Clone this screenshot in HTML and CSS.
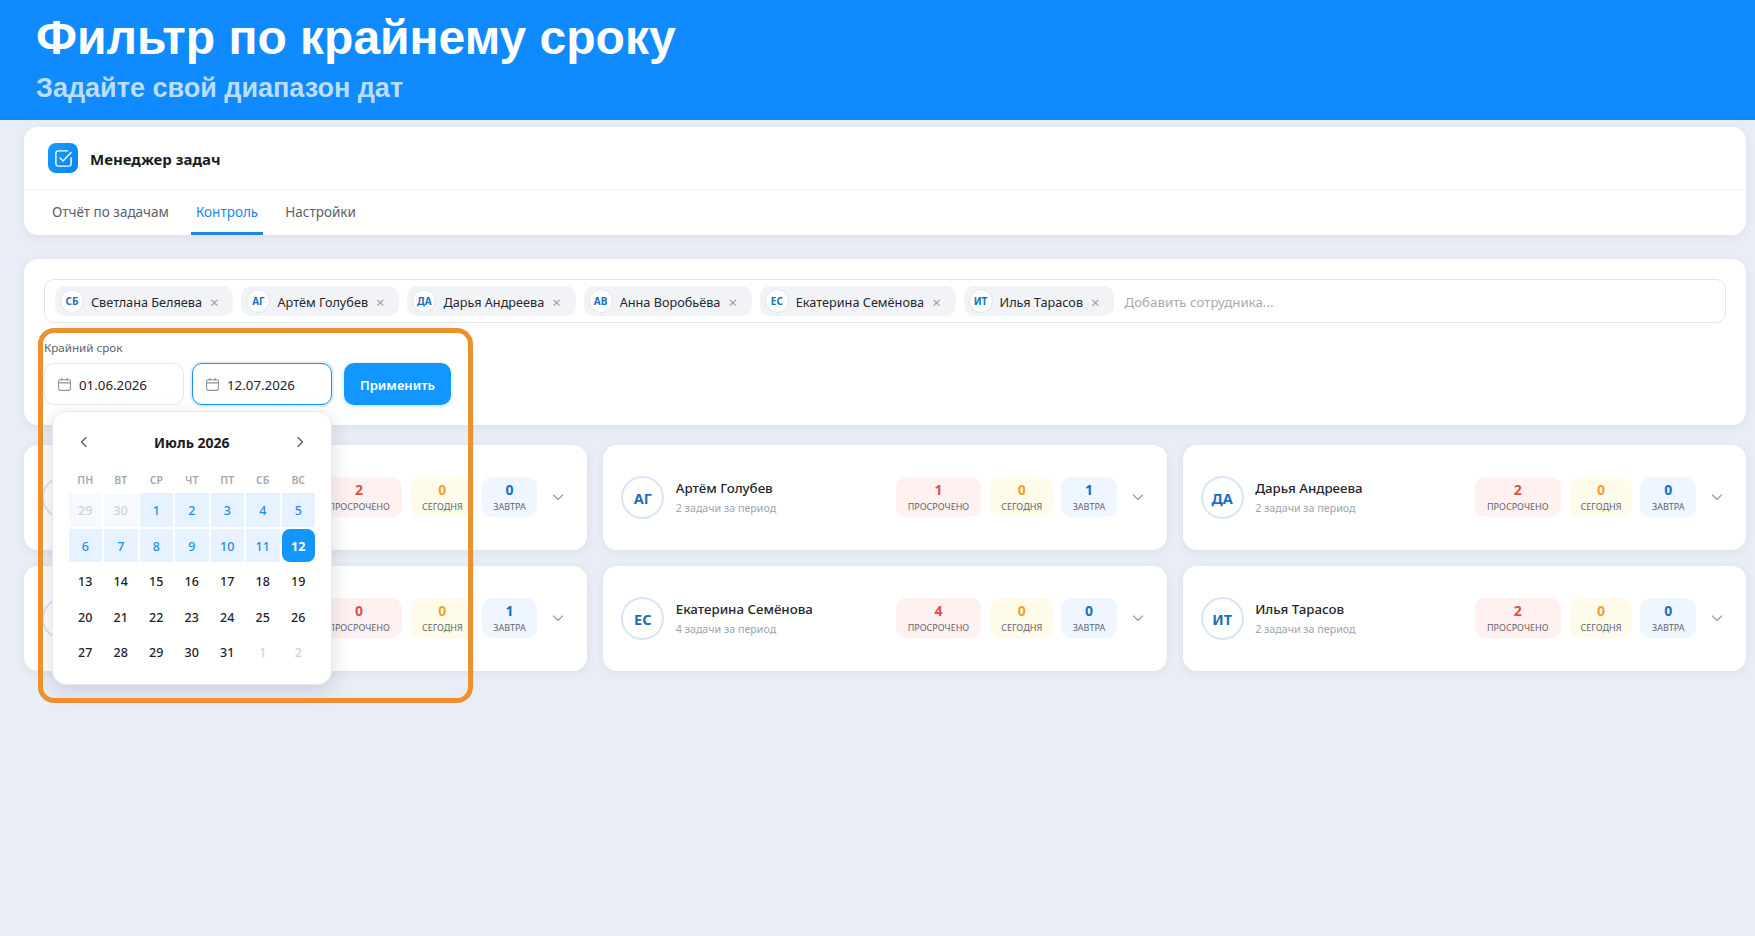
FILE: index.html
```html
<!DOCTYPE html>
<html lang="ru">
<head>
<meta charset="utf-8">
<title>Фильтр по крайнему сроку</title>
<link rel="stylesheet" href="styles.css">
</head>
<body>
<header class="banner">
  <h1 class="banner-title">Фильтр по крайнему сроку</h1>
  <p class="banner-sub">Задайте свой диапазон дат</p>
</header>
<main class="page">
  <section class="app-card">
    <div class="app-head">
      <span class="logo">
        <svg width="21" height="21" viewBox="0 0 18 18" fill="none" stroke="#fff" stroke-width="1.2" stroke-linecap="round" stroke-linejoin="round"><path d="M15.5 8.5v5.2a1.8 1.8 0 0 1-1.8 1.8H4.3a1.8 1.8 0 0 1-1.8-1.8V4.3a1.8 1.8 0 0 1 1.8-1.8h8.2"/><path d="M6 8.5l2.6 2.600L15.500 3.800"/></svg>
      </span>
      <span class="app-name">Менеджер задач</span>
    </div>
    <nav class="tabs">
      <a class="tab">Отчёт по задачам</a>
      <a class="tab tab-active">Контроль</a>
      <a class="tab">Настройки</a>
    </nav>
  </section>

  <section class="filter-card">
    <div class="tag-box">
      <span class="chip"><span class="chip-av">СБ</span><span class="chip-name">Светлана Беляева</span><span class="chip-x">×</span></span>
      <span class="chip"><span class="chip-av">АГ</span><span class="chip-name">Артём Голубев</span><span class="chip-x">×</span></span>
      <span class="chip"><span class="chip-av">ДА</span><span class="chip-name">Дарья Андреева</span><span class="chip-x">×</span></span>
      <span class="chip"><span class="chip-av">АВ</span><span class="chip-name">Анна Воробьёва</span><span class="chip-x">×</span></span>
      <span class="chip"><span class="chip-av">ЕС</span><span class="chip-name">Екатерина Семёнова</span><span class="chip-x">×</span></span>
      <span class="chip"><span class="chip-av">ИТ</span><span class="chip-name">Илья Тарасов</span><span class="chip-x">×</span></span>
      <span class="placeholder">Добавить сотрудника...</span>
    </div>
    <div class="deadline">
      <div class="deadline-label">Крайний срок</div>
      <div class="deadline-row">
        <div class="date-input">
          <svg class="cal-icon" width="15" height="15" viewBox="0 0 14 14" fill="none" stroke="#8b929c" stroke-width="1"><rect x="1.5" y="2.5" width="11" height="10" rx="1.2"/><path d="M1.5 5.5h11M4.5 1v2.5M9.5 1v2.5"/></svg>
          <span class="date-text">01.06.2026</span>
        </div>
        <div class="date-input date-focus">
          <svg class="cal-icon" width="15" height="15" viewBox="0 0 14 14" fill="none" stroke="#8b929c" stroke-width="1"><rect x="1.5" y="2.5" width="11" height="10" rx="1.2"/><path d="M1.5 5.5h11M4.5 1v2.5M9.5 1v2.5"/></svg>
          <span class="date-text">12.07.2026</span>
        </div>
        <button class="apply">Применить</button>
      </div>
      <div class="calendar">
        <div class="cal-head">
          <svg width="12" height="12" viewBox="0 0 12 12" fill="none" stroke="#555c66" stroke-width="1.3" stroke-linecap="round" stroke-linejoin="round"><path d="M8 1.5L3.5 6 8 10.5"/></svg>
          <span class="cal-title">Июль 2026</span>
          <svg width="12" height="12" viewBox="0 0 12 12" fill="none" stroke="#555c66" stroke-width="1.3" stroke-linecap="round" stroke-linejoin="round"><path d="M4 1.5L8.500 6 4 10.500"/></svg>
        </div>
        <div class="cal-grid cal-weekdays">
          <span>ПН</span><span>ВТ</span><span>СР</span><span>ЧТ</span><span>ПТ</span><span>СБ</span><span>ВС</span>
        </div>
        <div class="cal-grid">
          <span class="day out soft">29</span><span class="day out soft">30</span><span class="day range">1</span><span class="day range">2</span><span class="day range">3</span><span class="day range">4</span><span class="day range">5</span>
          <span class="day range">6</span><span class="day range">7</span><span class="day range">8</span><span class="day range">9</span><span class="day range">10</span><span class="day range">11</span><span class="day end">12</span>
          <span class="day">13</span><span class="day">14</span><span class="day">15</span><span class="day">16</span><span class="day">17</span><span class="day">18</span><span class="day">19</span>
          <span class="day">20</span><span class="day">21</span><span class="day">22</span><span class="day">23</span><span class="day">24</span><span class="day">25</span><span class="day">26</span>
          <span class="day">27</span><span class="day">28</span><span class="day">29</span><span class="day">30</span><span class="day">31</span><span class="day out">1</span><span class="day out">2</span>
        </div>
      </div>
    </div>
  </section>

  <section class="people">
    <article class="person">
      <span class="avatar">СБ</span>
      <div class="person-info"><div class="person-name">Светлана Беляева</div><div class="person-meta">2 задачи за период</div></div>
      <div class="stat stat-red"><b>2</b><span>ПРОСРОЧЕНО</span></div>
      <div class="stat stat-yellow"><b>0</b><span>СЕГОДНЯ</span></div>
      <div class="stat stat-blue"><b>0</b><span>ЗАВТРА</span></div>
      <svg class="chev" width="12" height="12" viewBox="0 0 12 12" fill="none" stroke="#9aa1ab" stroke-width="1.2" stroke-linecap="round" stroke-linejoin="round"><path d="M1.500 4l4.500 4.500L10.500 4"/></svg>
    </article>
    <article class="person">
      <span class="avatar">АГ</span>
      <div class="person-info"><div class="person-name">Артём Голубев</div><div class="person-meta">2 задачи за период</div></div>
      <div class="stat stat-red"><b>1</b><span>ПРОСРОЧЕНО</span></div>
      <div class="stat stat-yellow"><b>0</b><span>СЕГОДНЯ</span></div>
      <div class="stat stat-blue"><b>1</b><span>ЗАВТРА</span></div>
      <svg class="chev" width="12" height="12" viewBox="0 0 12 12" fill="none" stroke="#9aa1ab" stroke-width="1.2" stroke-linecap="round" stroke-linejoin="round"><path d="M1.500 4l4.500 4.500L10.500 4"/></svg>
    </article>
    <article class="person">
      <span class="avatar">ДА</span>
      <div class="person-info"><div class="person-name">Дарья Андреева</div><div class="person-meta">2 задачи за период</div></div>
      <div class="stat stat-red"><b>2</b><span>ПРОСРОЧЕНО</span></div>
      <div class="stat stat-yellow"><b>0</b><span>СЕГОДНЯ</span></div>
      <div class="stat stat-blue"><b>0</b><span>ЗАВТРА</span></div>
      <svg class="chev" width="12" height="12" viewBox="0 0 12 12" fill="none" stroke="#9aa1ab" stroke-width="1.2" stroke-linecap="round" stroke-linejoin="round"><path d="M1.500 4l4.500 4.500L10.500 4"/></svg>
    </article>
    <article class="person">
      <span class="avatar">АВ</span>
      <div class="person-info"><div class="person-name">Анна Воробьёва</div><div class="person-meta">2 задачи за период</div></div>
      <div class="stat stat-red"><b>0</b><span>ПРОСРОЧЕНО</span></div>
      <div class="stat stat-yellow"><b>0</b><span>СЕГОДНЯ</span></div>
      <div class="stat stat-blue"><b>1</b><span>ЗАВТРА</span></div>
      <svg class="chev" width="12" height="12" viewBox="0 0 12 12" fill="none" stroke="#9aa1ab" stroke-width="1.2" stroke-linecap="round" stroke-linejoin="round"><path d="M1.500 4l4.500 4.500L10.500 4"/></svg>
    </article>
    <article class="person">
      <span class="avatar">ЕС</span>
      <div class="person-info"><div class="person-name">Екатерина Семёнова</div><div class="person-meta">4 задачи за период</div></div>
      <div class="stat stat-red"><b>4</b><span>ПРОСРОЧЕНО</span></div>
      <div class="stat stat-yellow"><b>0</b><span>СЕГОДНЯ</span></div>
      <div class="stat stat-blue"><b>0</b><span>ЗАВТРА</span></div>
      <svg class="chev" width="12" height="12" viewBox="0 0 12 12" fill="none" stroke="#9aa1ab" stroke-width="1.2" stroke-linecap="round" stroke-linejoin="round"><path d="M1.500 4l4.500 4.500L10.500 4"/></svg>
    </article>
    <article class="person">
      <span class="avatar">ИТ</span>
      <div class="person-info"><div class="person-name">Илья Тарасов</div><div class="person-meta">2 задачи за период</div></div>
      <div class="stat stat-red"><b>2</b><span>ПРОСРОЧЕНО</span></div>
      <div class="stat stat-yellow"><b>0</b><span>СЕГОДНЯ</span></div>
      <div class="stat stat-blue"><b>0</b><span>ЗАВТРА</span></div>
      <svg class="chev" width="12" height="12" viewBox="0 0 12 12" fill="none" stroke="#9aa1ab" stroke-width="1.2" stroke-linecap="round" stroke-linejoin="round"><path d="M1.500 4l4.500 4.500L10.500 4"/></svg>
    </article>
  </section>
</main>
<div class="callout"></div>
</body>
</html>
```
FILE: styles.css
```css
* { box-sizing: border-box; }
html, body { margin: 0; height: 936px; overflow: hidden; }
body {
  position: relative;
  background: #e9edf5;
  font-family: "Noto Sans", "Liberation Sans", sans-serif;
  color: #1f2329;
}
.banner {
  height: 120px;
  background: #0f8bff;
  padding: 9px 36px 0;
  font-family: "Liberation Sans", Arial, sans-serif;
}
.banner-title {
  margin: 0;
  font-size: 48px;
  line-height: 58px;
  font-weight: 700;
  color: #fff;
}
.banner-sub {
  margin: 6px 0 0;
  font-size: 27px;
  line-height: 30px;
  font-weight: 700;
  color: rgba(255, 255, 255, 0.72);
}
.page { padding: 7px 9px 0 24px; }

.app-card {
  background: #fff;
  border-radius: 14px;
  height: 108px;
  box-shadow: 0 2px 10px rgba(40, 60, 100, 0.07);
  margin-bottom: 24px;
}
.app-head {
  height: 63px;
  padding: 16px 24px 0;
  display: flex;
  align-items: flex-start;
  gap: 12px;
  border-bottom: 1px solid #eef0f3;
}
.logo {
  width: 30px;
  height: 30px;
  border-radius: 8px;
  background: linear-gradient(135deg, #1a9bff, #0b84ec);
  display: flex;
  align-items: center;
  justify-content: center;
}
.app-name {
  font-size: 15px;
  line-height: 32px;
  font-weight: 700;
  color: #1a1d21;
}
.tabs {
  display: flex;
  gap: 17px;
  padding: 0 23px;
  height: 45px;
}
.tab {
  padding: 1px 5px 0;
  font-size: 13.5px;
  line-height: 42px;
  color: #5a616b;
  border-bottom: 3px solid transparent;
}
.tab-active {
  color: #1e88e5;
  border-bottom-color: #1e88e5;
}

.filter-card {
  background: #fff;
  border-radius: 14px;
  height: 166px;
  padding: 20px;
  box-shadow: 0 2px 10px rgba(40, 60, 100, 0.07);
  margin-bottom: 20px;
}
.tag-box {
  height: 44px;
  border: 1px solid #e2e5ea;
  border-radius: 10px;
  display: flex;
  align-items: center;
  gap: 8px;
  padding: 0 10px;
}
.chip {
  height: 30px;
  border-radius: 10px;
  background: #f1f3f7;
  display: flex;
  align-items: center;
  padding: 0 14.800px 0 5px;
  font-size: 12.700px;
  color: #24282e;
}
.chip-name { padding-top: 2px; }
.chip-av {
  width: 24px;
  height: 24px;
  border-radius: 50%;
  background: #fff;
  border: 1.500px solid #d8e6f7;
  color: #1a6fc0;
  font-size: 10px;
  font-weight: 700;
  display: flex;
  align-items: center;
  justify-content: center;
  margin-right: 7px;
}
.chip-x {
  margin-left: 8px;
  padding-top: 2px;
  color: #9aa0a8;
  font-size: 15px;
  line-height: 30px;
}
.placeholder {
  margin-left: 2px;
  padding-top: 2px;
  font-size: 13.300px;
  color: #a6abb3;
}
.deadline { position: relative; margin-top: 16px; }
.deadline-label {
  font-size: 11.600px;
  line-height: 16px;
  padding-top: 1px;
  color: #5e646e;
  margin-bottom: 7px;
}
.deadline-row { display: flex; gap: 8px; align-items: stretch; height: 42px; }
.date-input {
  width: 140px;
  border: 1px solid #e6e8ec;
  border-radius: 10px;
  background: #fff;
  display: flex;
  align-items: center;
  gap: 7px;
  padding-left: 12px;
  font-size: 13.300px;
  color: #1f2329;
}
.date-text { padding-top: 2px; }
.date-focus {
  border-color: #1a90f0;
  box-shadow: 0 0 0 2px #dff0ff;
}
.cal-icon { flex: none; }
.apply {
  width: 107px;
  margin-left: 4px;
  padding-top: 2px;
  border: 0;
  border-radius: 10px;
  background: #1296ff;
  color: #fff;
  font-family: inherit;
  font-size: 13px;
  font-weight: 600;
  box-shadow: 0 1px 4px rgba(18, 150, 255, 0.3);
}
.calendar {
  position: absolute;
  left: 8px;
  top: 72px;
  width: 280px;
  height: 274px;
  z-index: 2;
  background: #fff;
  border: 1px solid #e6e8ed;
  border-radius: 14px;
  box-shadow: 0 6px 20px rgba(30, 45, 80, 0.16);
  padding: 0 16px 0 15.500px;
}
.cal-head {
  height: 55px;
  padding: 5px 9px 0;
  display: flex;
  align-items: center;
  justify-content: space-between;
}
.cal-title { font-size: 14px; font-weight: 700; color: #1a1d21; }
.cal-grid {
  display: grid;
  grid-template-columns: repeat(7, 1fr);
  gap: 2px;
  text-align: center;
}
.cal-weekdays {
  font-size: 10.5px;
  font-weight: 600;
  color: #a3a8b0;
  line-height: 26px;
  height: 26px;
}
.day {
  height: 33.500px;
  padding-top: 2px;
  display: flex;
  align-items: center;
  justify-content: center;
  font-size: 12.5px;
  font-weight: 500;
  color: #1f2329;
}
.day.range { background: #e6f2ff; color: #1f8ceb; }
.day.out { color: #cfd3d9; }
.day.soft { background: #f6f9fd; }
.day.end { background: #1296ff; color: #fff; font-weight: 700; border-radius: 8px; }

.people {
  display: grid;
  grid-template-columns: repeat(3, 1fr);
  gap: 16px;
}
.person {
  height: 105px;
  background: #fff;
  border-radius: 14px;
  box-shadow: 0 2px 10px rgba(40, 60, 100, 0.07);
  display: flex;
  align-items: center;
  padding: 0 23px 0 18px;
  gap: 8px;
}
.avatar {
  width: 43px;
  height: 43px;
  flex: none;
  border-radius: 50%;
  border: 2px solid #d8e6f7;
  color: #1a6fc0;
  font-size: 14.5px;
  font-weight: 700;
  display: flex;
  align-items: center;
  justify-content: center;
  margin-right: 3.500px;
}
.person-info { flex: 1; min-width: 0; }
.person-name { font-size: 13.300px; line-height: 20px; color: #24282e; font-weight: 500; }
.person-meta { font-size: 10.700px; line-height: 20px; color: #a0a5ad; }
.stat {
  height: 40px;
  border-radius: 10px;
  padding: 0 12px;
  text-align: center;
  display: flex;
  flex-direction: column;
  align-items: center;
  justify-content: center;
  margin-top: -1px;
}
.stat b { font-size: 14px; line-height: 17px; font-weight: 700; }
.stat span { font-size: 9px; line-height: 15px; margin-top: 1px; color: #5e646e; }
.stat-red { background: #fff1f0; margin-right: 1px; }
.stat-red b { color: #d9504c; }
.stat-yellow { background: #fffbeb; padding: 0 11px; }
.stat-yellow b { color: #f2a12e; }
.stat-blue { background: #eff6ff; padding: 0 11.500px; }
.stat-blue b { color: #1a6fc0; }
.chev { flex: none; margin-left: 7px; margin-bottom: 2px; }

.callout {
  position: absolute;
  left: 38px;
  top: 328px;
  width: 435px;
  height: 375px;
  border: 5px solid #ee9030;
  border-radius: 16px;
  pointer-events: none;
  z-index: 5;
}
```
